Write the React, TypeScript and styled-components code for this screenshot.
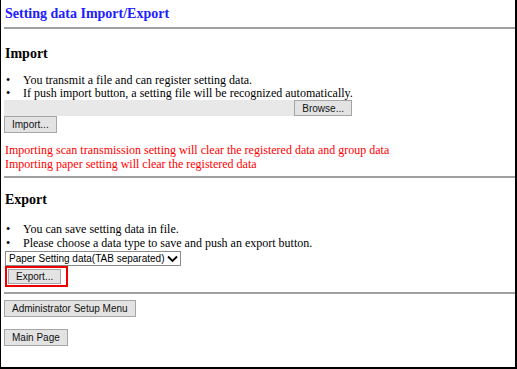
import styled, { createGlobalStyle } from "styled-components";

const Global = createGlobalStyle`
  html, body { margin: 0; padding: 0; background: #fff; }
  body { font-family: "Liberation Serif", "Times New Roman", serif; font-size: 12px; color: #000; }
`;

const Frame = styled.div`
  box-sizing: border-box;
  width: 517px;
  height: 369px;
  border-left: 1px solid #000;
  border-right: 2px solid #000;
  border-bottom: 2px solid #000;
  padding: 4px 0 0 3px;
  overflow: hidden;
`;

const Title = styled.h1`
  margin: 0;
  padding-left: 1px;
  font-size: 14px;
  font-weight: bold;
  color: #2020ff;
  line-height: 20px;
`;

const Rule = styled.hr<{ $top: number }>`
  margin: ${(p) => p.$top}px 0 0 0;
  border: none;
  border-top: 2px solid #a0a0a0;
`;

const SectionTitle = styled.h3<{ $top: number }>`
  margin: ${(p) => p.$top}px 0 0 0;
  padding-left: 1px;
  font-size: 14px;
  font-weight: bold;
  line-height: 20px;
`;

const Bullets = styled.ul<{ $top: number; $lh: number }>`
  margin: ${(p) => p.$top}px 0 0 0;
  padding: 0;
  list-style: none;
  line-height: ${(p) => p.$lh}px;
`;

const Bullet = styled.li`
  display: flex;
  &::before {
    content: "•";
    width: 17px;
    padding-left: 2px;
  }
`;

const FileRow = styled.div`
  display: flex;
  width: 348px;
  height: 16px;
  background: #e8e8e8;
`;

const FileName = styled.div`
  flex: 1;
`;

const Button = styled.button<{ $h?: number }>`
  box-sizing: border-box;
  display: inline-flex;
  align-items: center;
  height: ${(p) => p.$h ?? 17}px;
  padding: 0 7px;
  border: 1px solid #a6a6a6;
  background: #e3e3e3;
  font-family: "Liberation Sans", Arial, sans-serif;
  font-size: 10px;
  color: #111;
  cursor: default;
`;

const Warnings = styled.div`
  margin-top: 10px;
  padding-left: 1px;
  color: #f00;
  line-height: 14px;
`;

const Select = styled.div`
  box-sizing: border-box;
  display: inline-flex;
  align-items: center;
  gap: 3px;
  height: 15px;
  margin-left: 1px;
  padding: 0 2px 0 3px;
  border: 1px solid #8a8a8a;
  background: #fff;
  font-family: "Liberation Sans", Arial, sans-serif;
  font-size: 10px;
`;

const Highlight = styled.div`
  display: flex;
  margin-left: 1px;
  padding: 1px 5px 1px 1px;
  border: 2px solid #e00;
`;

const Row = styled.div<{ $top: number }>`
  display: flex;
  margin-top: ${(p) => p.$top}px;
`;

export default function App() {
  return (
    <>
      <Global />
      <Frame>
        <Title>Setting data Import/Export</Title>
        <Rule $top={3} />
        <SectionTitle $top={15}>Import</SectionTitle>
        <Bullets $top={10} $lh={13}>
          <Bullet>You transmit a file and can register setting data.</Bullet>
          <Bullet>If push import button, a setting file will be recognized automatically.</Bullet>
        </Bullets>
        <FileRow>
          <FileName />
          <Button $h={16}>Browse...</Button>
        </FileRow>
        <Row $top={0}>
          <Button>Import...</Button>
        </Row>
        <Warnings>
          <div>Importing scan transmission setting will clear the registered data and group data</div>
          <div>Importing paper setting will clear the registered data</div>
        </Warnings>
        <Rule $top={5} />
        <SectionTitle $top={12}>Export</SectionTitle>
        <Bullets $top={12} $lh={14}>
          <Bullet>You can save setting data in file.</Bullet>
          <Bullet>Please choose a data type to save and push an export button.</Bullet>
        </Bullets>
        <Row $top={1}>
          <Select>
            Paper Setting data(TAB separated)
            <svg width="11" height="8" viewBox="0 0 11 8">
              <path d="M1 1.5 L5.5 6 L10 1.5" fill="none" stroke="#000" strokeWidth="1.8" />
            </svg>
          </Select>
        </Row>
        <Row $top={0}>
          <Highlight>
            <Button $h={15}>Export...</Button>
          </Highlight>
        </Row>
        <Rule $top={5} />
        <Row $top={6}>
          <Button>Administrator Setup Menu</Button>
        </Row>
        <Row $top={12}>
          <Button>Main Page</Button>
        </Row>
      </Frame>
    </>
  );
}
